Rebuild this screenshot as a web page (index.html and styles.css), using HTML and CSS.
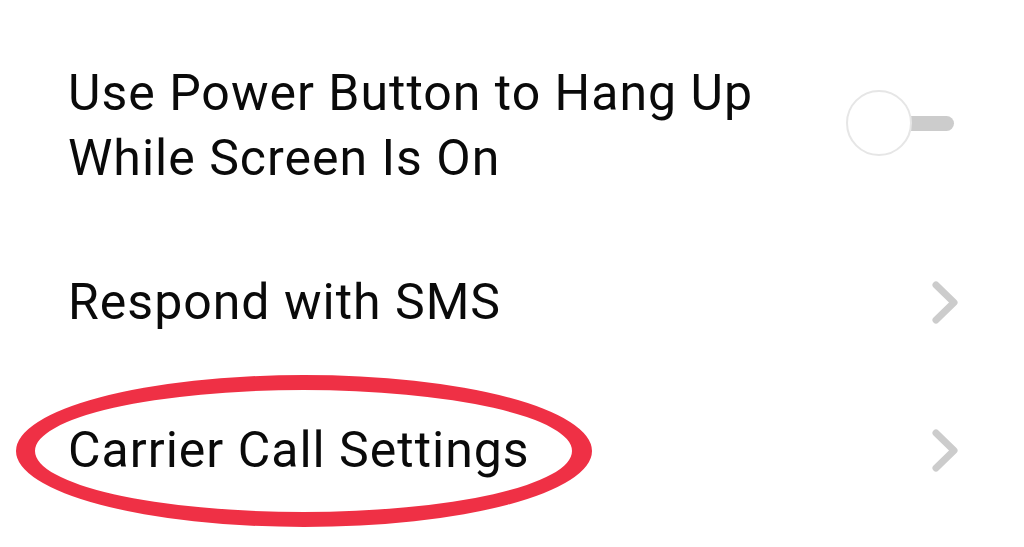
FILE: index.html
```html
<!DOCTYPE html>
<html lang="en">
<head>
  <meta charset="UTF-8" />
  <meta name="viewport" content="width=device-width, initial-scale=1.0" />
  <title>Call Settings</title>
  <link rel="stylesheet" href="styles.css">
</head>
<body>
  <main class="settings">
    <div class="row row-tall">
      <span class="label">Use Power Button to Hang Up<br>While Screen Is On</span>
      <span class="switch">
        <span class="track"></span>
        <span class="knob"></span>
      </span>
    </div>

    <div class="row">
      <span class="label">Respond with SMS</span>
      <svg class="chevron" viewBox="0 0 26 43" width="26" height="43">
        <polyline points="4,4 22,21.5 4,39" />
      </svg>
    </div>

    <div class="row">
      <span class="label">Carrier Call Settings</span>
      <svg class="chevron" viewBox="0 0 26 43" width="26" height="43">
        <polyline points="4,4 22,21.5 4,39" />
      </svg>
    </div>

    <!-- red marker ring around the carrier row -->
    <svg class="marker" viewBox="0 0 1024 547" width="1024" height="547">
      <path fill-rule="evenodd" d="M16,451 a288,76 0 1,0 576,0 a288,76 0 1,0 -576,0 Z M35,451 a268.5,61 0 1,0 537,0 a268.5,61 0 1,0 -537,0 Z" />
    </svg>
  </main>
</body>
</html>
```

FILE: styles.css
```css
body {
  margin: 0;
  background: #ffffff;
  font-family: Roboto, "Noto Sans", sans-serif;
  color: #0a0a0a;
}
.settings {
  position: relative;
  width: 1024px;
  height: 547px;
  overflow: hidden;
}
.row {
  display: flex;
  align-items: center;
  justify-content: space-between;
  height: 148px;
  padding: 0 66px 0 68px;
  box-sizing: border-box;
}
.row-tall {
  height: 228px;
  padding-top: 61px;
  padding-bottom: 37px;
}
.label {
  font-size: 50px;
  line-height: 65px;
  letter-spacing: 1px;
}
.switch {
  position: relative;
  width: 108px;
  height: 66px;
  margin-right: 4px;
  margin-bottom: 6px;
}
.track {
  position: absolute;
  right: 0;
  top: 26px;
  width: 60px;
  height: 15px;
  border-radius: 8px;
  background: #cccccc;
}
.knob {
  position: absolute;
  left: 0;
  top: 0;
  width: 66px;
  height: 66px;
  box-sizing: border-box;
  border-radius: 50%;
  border: 2px solid #e6e6e6;
  background: #ffffff;
}
.chevron polyline {
  fill: none;
  stroke: #cccccc;
  stroke-width: 7;
  stroke-linecap: round;
  stroke-linejoin: round;
}
.marker {
  position: absolute;
  left: 0;
  top: 0;
  pointer-events: none;
}
.marker path {
  fill: #ef3045;
}
```
